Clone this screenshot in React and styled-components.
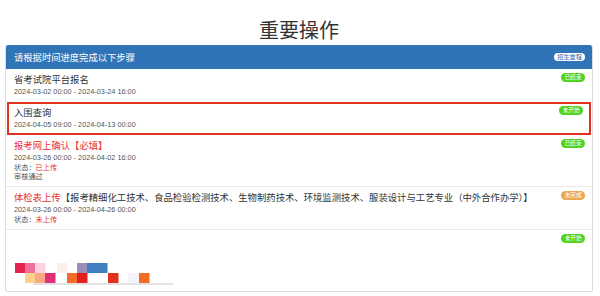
import React from 'react';
import styled, {createGlobalStyle} from 'styled-components';

const GlobalStyle = createGlobalStyle`
  html, body {
    margin: 0;
    padding: 0;
    background: #fff;
  }
  body {
    font-family: "Liberation Sans", "Noto Sans CJK SC", sans-serif;
    color: #333;
  }
`;

const Page = styled.div`
  width: 600px;
  height: 296px;
  overflow: hidden;
  padding: 0 7px 0 5px;
  box-sizing: border-box;
`;

const PageTitle = styled.h1`
  margin: 0;
  height: 45px;
  padding-top: 17px;
  box-sizing: border-box;
  text-align: center;
  font-family: "Noto Sans CJK SC", sans-serif;
  font-weight: 400;
  font-size: 20px;
  line-height: 26px;
  color: #333;
`;

const Panel = styled.div`
  border: 1px solid #dcdcdc;
  border-top: none;
  border-radius: 3px;
  overflow: hidden;
`;

const PanelHeader = styled.div`
  display: flex;
  align-items: center;
  justify-content: space-between;
  height: 24px;
  padding: 0 7px 0 8px;
  background: #3074b8;
  color: #fff;
  font-family: "Noto Sans CJK SC", sans-serif;
  font-size: 9.3px;
`;

const Badge = styled.span`
  display: inline-block;
  flex: none;
  height: 8.5px;
  line-height: 8.5px;
  padding: 0 ${({$tone}) => ($tone === 'light' ? '3px' : '3.5px')};
  border-radius: 5px;
  font-family: "Noto Sans CJK SC", sans-serif;
  font-size: ${({$tone}) => ($tone === 'light' ? '6.2px' : '5.6px')};
  color: ${({$tone}) => ($tone === 'light' ? '#2f6db0' : '#fff')};
  background: ${({$tone}) =>
    $tone === 'green' ? '#52d21f' : $tone === 'orange' ? '#eba94f' : '#fff'};
`;

const Row = styled.div`
  display: flex;
  justify-content: space-between;
  align-items: flex-start;
  padding: 4px 7px 5px 8px;
  border-top: ${({$first}) => ($first ? 'none' : '1px solid #e9e9e9')};
  min-height: ${({$tall}) => ($tall ? '50px' : 'auto')};
  ${({$active}) =>
    $active &&
    `
    border: 2px solid #e0331f;
    margin: 0 1px;
    padding: 2px 6px 3px 5px;
  `}
`;

const RowBody = styled.div`
  flex: 1;
  min-width: 0;
`;

const RowTitle = styled.div`
  font-family: "Noto Sans CJK SC", sans-serif;
  font-size: 9.35px;
  line-height: 13px;
  color: #333;
  white-space: nowrap;
`;

const Red = styled.span`
  color: #e8302e;
`;

const DateLine = styled.div`
  margin-top: 1px;
  font-size: 7.3px;
  line-height: 10px;
  color: #555;
`;

const InfoLine = styled.div`
  font-family: "Noto Sans CJK SC", sans-serif;
  font-size: 7.2px;
  line-height: 9px;
  color: #555;
`;

const Mosaic = styled.svg`
  display: block;
  margin-top: 29px;
  margin-left: 1px;
`;

const tiles = [
  [0, 0, '#e3264f'],
  [10, 0, '#f0709a'],
  [20, 0, '#fbd3df'],
  [42, 0, '#fbf0ec'],
  [62, 0, '#9a8fb8'],
  [72, 0, '#4080c0'],
  [82, 0, '#4080c0'],
  [10, 10, '#fdd08f'],
  [20, 10, '#f9a882'],
  [30, 10, '#e02e78'],
  [52, 10, '#f26b2c'],
  [62, 10, '#e1201d'],
  [93, 10, '#e1321f'],
  [113, 10, '#f5f3fa'],
  [124, 10, '#f16b21'],
];

const BlurredImage = () => (
  <Mosaic width="170" height="23" viewBox="0 0 170 23">
    <rect x="18" y="20" width="140" height="2" rx="1" fill="#e2e2e2" />
    {tiles.map(([x, y, c], i) => (
      <rect key={i} x={x} y={y} width="10.5" height="10" fill={c} />
    ))}
  </Mosaic>
);

export default function App() {
  return (
    <>
      <GlobalStyle />
      <Page>
        <PageTitle>重要操作</PageTitle>
        <Panel>
          <PanelHeader>
            <span>请根据时间进度完成以下步骤</span>
            <Badge $tone="light">招生章程</Badge>
          </PanelHeader>

          <Row $first>
            <RowBody>
              <RowTitle>省考试院平台报名</RowTitle>
              <DateLine>2024-03-02 00:00 - 2024-03-24 16:00</DateLine>
            </RowBody>
            <Badge $tone="green">已结束</Badge>
          </Row>

          <Row $active>
            <RowBody>
              <RowTitle>入围查询</RowTitle>
              <DateLine>2024-04-05 09:00 - 2024-04-13 00:00</DateLine>
            </RowBody>
            <Badge $tone="green">未开始</Badge>
          </Row>

          <Row $first>
            <RowBody>
              <RowTitle>
                <Red>报考网上确认【必填】</Red>
              </RowTitle>
              <DateLine>2024-03-26 00:00 - 2024-04-02 16:00</DateLine>
              <InfoLine>
                状态：<Red>已上传</Red>
              </InfoLine>
              <InfoLine>审核通过</InfoLine>
            </RowBody>
            <Badge $tone="green">已结束</Badge>
          </Row>

          <Row>
            <RowBody>
              <RowTitle>
                <Red>体检表上传</Red>
                【报考精细化工技术、食品检验检测技术、生物制药技术、环境监测技术、服装设计与工艺专业（中外合作办学）】
              </RowTitle>
              <DateLine>2024-03-26 00:00 - 2024-04-26 00:00</DateLine>
              <InfoLine>
                状态：<Red>未上传</Red>
              </InfoLine>
            </RowBody>
            <Badge $tone="orange">未完成</Badge>
          </Row>

          <Row $tall>
            <RowBody>
              <BlurredImage />
            </RowBody>
            <Badge $tone="green">未开始</Badge>
          </Row>
        </Panel>
      </Page>
    </>
  );
}
